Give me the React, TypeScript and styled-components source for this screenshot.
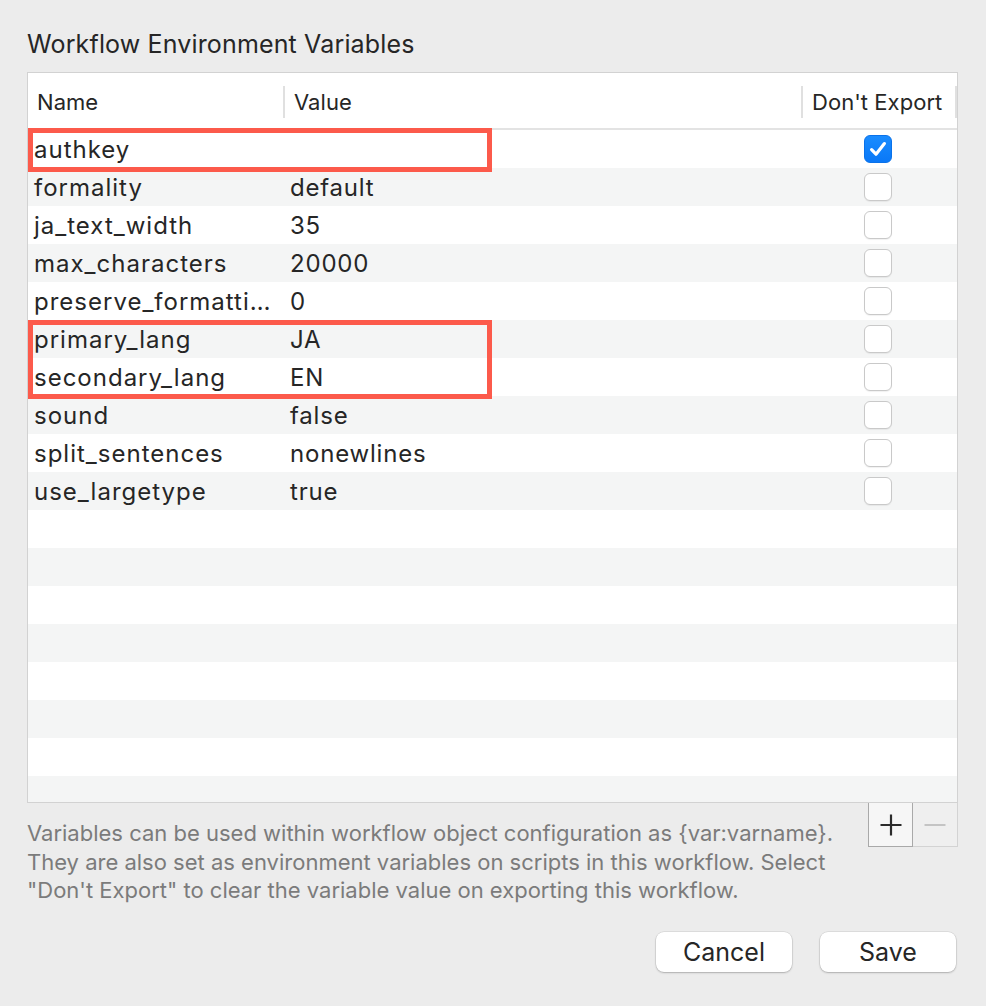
import React from "react";
import styled, { createGlobalStyle } from "styled-components";

const GlobalStyle = createGlobalStyle`
  html, body {
    margin: 0;
    padding: 0;
    background: #ececec;
  }
  body {
    font-family: Inter, "Noto Sans", "Liberation Sans", sans-serif;
    color: #262626;
    -webkit-font-smoothing: antialiased;
  }
`;

const Dialog = styled.div`
  width: 986px;
  height: 1006px;
  box-sizing: border-box;
  padding: 28px 28px 0 27px;
  display: flex;
  flex-direction: column;
  background: #ececec;
`;

const Title = styled.h1`
  margin: 0;
  font-size: 25px;
  letter-spacing: 0.15px;
  font-weight: 400;
  line-height: 32px;
  color: #262626;
`;

const TableFrame = styled.div`
  position: relative;
  margin-top: 12px;
  height: 731px;
  box-sizing: border-box;
  border: 1px solid #d2d2d2;
  background: #ffffff;
  overflow: hidden;
`;

const columns = "255px 518px 154px 1fr";

const HeaderRow = styled.div`
  display: grid;
  grid-template-columns: ${columns};
  height: 55px;
  border-bottom: 2px solid #e3e3e3;
`;

const HeaderCell = styled.div<{ $divider?: boolean }>`
  position: relative;
  display: flex;
  align-items: center;
  padding-top: 3px;
  padding-left: 9px;
  font-size: 22px;
  letter-spacing: 0.05px;
  color: #262626;
  border-left: ${(p) => (p.$divider ? "2px solid transparent" : "none")};
  &::before {
    content: "";
    display: ${(p) => (p.$divider ? "block" : "none")};
    position: absolute;
    left: -2px;
    top: 13px;
    bottom: 10px;
    width: 2px;
    background: #e0e0e0;
  }
`;

const Row = styled.div<{ $alt: boolean }>`
  display: grid;
  grid-template-columns: ${columns};
  height: 38px;
  background: ${(p) => (p.$alt ? "#f4f5f5" : "#ffffff")};
`;

const NameCell = styled.div`
  display: flex;
  align-items: center;
  padding-left: 6px;
  padding-top: 2px;
  font-size: 24px;
  letter-spacing: 1px;
  line-height: 36px;
  white-space: nowrap;
  overflow: hidden;
`;

const ValueCell = styled(NameCell)`
  padding-left: 7px;
  letter-spacing: 0.8px;
`;

const CheckCell = styled.div`
  display: flex;
  align-items: center;
  justify-content: center;
`;

const Box = styled.div<{ $checked: boolean }>`
  width: 28px;
  height: 28px;
  box-sizing: border-box;
  border-radius: 6px;
  display: flex;
  align-items: center;
  justify-content: center;
  background: ${(p) =>
    p.$checked ? "linear-gradient(#1a8cff, #0a78f7)" : "#ffffff"};
  border: 1px solid ${(p) => (p.$checked ? "#0a72ea" : "#c9c9c9")};
  box-shadow: ${(p) =>
    p.$checked ? "none" : "0 1px 1px rgba(0,0,0,0.06)"};
`;

const Highlight = styled.div<{ $top: number; $height: number }>`
  position: absolute;
  left: 0;
  top: ${(p) => p.$top}px;
  width: 464px;
  height: ${(p) => p.$height}px;
  box-sizing: border-box;
  border: 5px solid #fc5a4b;
  pointer-events: none;
`;

const Footer = styled.div`
  display: flex;
  align-items: flex-start;
  justify-content: space-between;
`;

const HelpText = styled.p`
  margin: 0;
  padding-top: 16px;
  font-size: 22px;
  line-height: 28.5px;
  color: #7b7b7b;
  white-space: nowrap;
`;

const SegGroup = styled.div`
  display: flex;
  margin-top: -1px;
`;

const SegButton = styled.button<{ $enabled: boolean }>`
  width: 45px;
  height: 45px;
  box-sizing: border-box;
  padding: 0;
  margin: 0;
  display: flex;
  align-items: center;
  justify-content: center;
  background: ${(p) => (p.$enabled ? "#f6f6f6" : "#efefef")};
  border: 1.5px solid ${(p) => (p.$enabled ? "#a9a9a9" : "#d3d3d3")};
  & + & {
    border-left: none;
  }
`;

const ButtonRow = styled.div`
  display: flex;
  justify-content: flex-end;
  gap: 28px;
  margin-top: 27px;
  padding-right: 2px;
`;

const PushButton = styled.button`
  width: 136px;
  height: 40px;
  border: none;
  border-radius: 8px;
  background: #ffffff;
  box-shadow: 0 0 0 0.5px rgba(0, 0, 0, 0.12), 0 1px 2px rgba(0, 0, 0, 0.22);
  font-family: Inter, "Noto Sans", "Liberation Sans", sans-serif;
  font-size: 25px;
  color: #262626;
  padding: 0;
`;

const rows: [string, string, boolean][] = [
  ["authkey", "", true],
  ["formality", "default", false],
  ["ja_text_width", "35", false],
  ["max_characters", "20000", false],
  ["preserve_formatti…", "0", false],
  ["primary_lang", "JA", false],
  ["secondary_lang", "EN", false],
  ["sound", "false", false],
  ["split_sentences", "nonewlines", false],
  ["use_largetype", "true", false],
];

const Check = () => (
  <svg width="20" height="20" viewBox="0 0 20 20">
    <path
      d="M3.6 10.6 L8 15.2 L16.4 4.6"
      fill="none"
      stroke="#ffffff"
      strokeWidth="3.2"
      strokeLinecap="round"
      strokeLinejoin="round"
    />
  </svg>
);

export default function App() {
  const empty = Array.from({ length: 8 }, (_, i) => i);
  return (
    <>
      <GlobalStyle />
      <Dialog>
        <Title>Workflow Environment Variables</Title>
        <TableFrame>
          <HeaderRow>
            <HeaderCell>Name</HeaderCell>
            <HeaderCell $divider>Value</HeaderCell>
            <HeaderCell $divider>Don't Export</HeaderCell>
            <HeaderCell $divider />
          </HeaderRow>
          {rows.map(([name, value, checked], i) => (
            <Row key={name} $alt={i % 2 === 1}>
              <NameCell>{name}</NameCell>
              <ValueCell>{value}</ValueCell>
              <CheckCell>
                <Box $checked={checked}>{checked && <Check />}</Box>
              </CheckCell>
              <div />
            </Row>
          ))}
          {empty.map((i) => (
            <Row key={"e" + i} $alt={(i + rows.length) % 2 === 1} />
          ))}
          <Highlight $top={55} $height={44} />
          <Highlight $top={247} $height={79} />
        </TableFrame>
        <Footer>
          <HelpText>
            Variables can be used within workflow object configuration as {"{var:varname}"}.
            <br />
            They are also set as environment variables on scripts in this workflow. Select
            <br />
            "Don't Export" to clear the variable value on exporting this workflow.
          </HelpText>
          <SegGroup>
            <SegButton $enabled aria-label="Add">
              <svg width="24" height="24" viewBox="0 0 24 24">
                <path d="M12 1.5V22.5M1.5 12H22.5" stroke="#2b2b2b" strokeWidth="2.2" />
              </svg>
            </SegButton>
            <SegButton $enabled={false} aria-label="Remove">
              <svg width="24" height="24" viewBox="0 0 24 24">
                <path d="M1.5 12H22.5" stroke="#c4c4c4" strokeWidth="2" />
              </svg>
            </SegButton>
          </SegGroup>
        </Footer>
        <ButtonRow>
          <PushButton>Cancel</PushButton>
          <PushButton>Save</PushButton>
        </ButtonRow>
      </Dialog>
    </>
  );
}
